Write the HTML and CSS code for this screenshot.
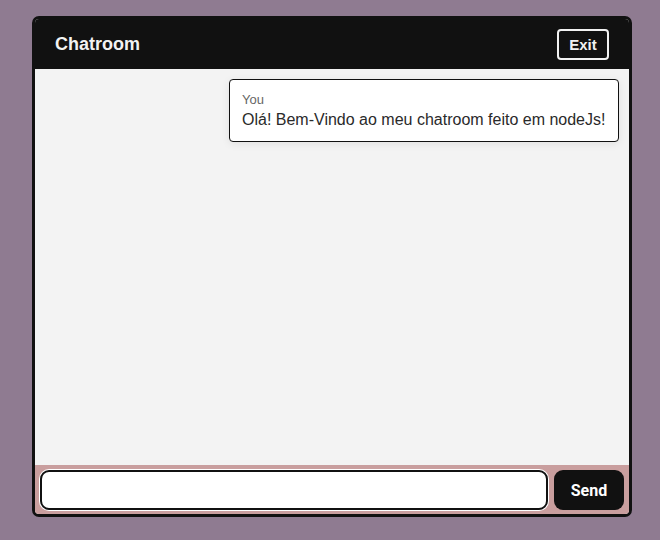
FILE: index.html
```html
<!DOCTYPE html>
<html>
<head>
<meta charset="utf-8">
<link rel="stylesheet" href="styles.css">
</head>
<body>
<div class="chat">
  <header class="chat-header">
    <h1 class="title">Chatroom</h1>
    <button class="exit">Exit</button>
  </header>
  <main class="messages">
    <div class="bubble">
      <div class="author">You</div>
      <div class="text">Olá! Bem-Vindo ao meu chatroom feito em nodeJs!</div>
    </div>
  </main>
  <footer class="composer">
    <input class="input" type="text">
    <button class="send">Send</button>
  </footer>
</div>
</body>
</html>
```
FILE: styles.css
```css
html, body {
  margin: 0;
  padding: 0;
  background: #8f7b91;
  font-family: "Liberation Sans", Arial, sans-serif;
}
body {
  padding: 16px 0 0 32px;
}
.chat {
  width: 594px;
  height: 495px;
  border: 3px solid #111;
  border-radius: 7px;
  overflow: hidden;
  display: flex;
  flex-direction: column;
  background: #f3f3f3;
}
.chat-header {
  height: 50px;
  flex: none;
  background: #111;
  display: flex;
  align-items: center;
  justify-content: space-between;
  padding: 0 20px;
}
.title {
  margin: 0;
  color: #f2f2f2;
  font-size: 18px;
  font-weight: bold;
}
.exit {
  font-family: "Liberation Sans", Arial, sans-serif;
  font-size: 15px;
  font-weight: bold;
  color: #f2f2f2;
  background: #111;
  border: 2px solid #f2f2f2;
  border-radius: 4px;
  width: 52px;
  height: 31px;
  padding: 0;
  margin-top: 1px;
}
.messages {
  flex: 1;
  display: flex;
  flex-direction: column;
  align-items: flex-end;
  padding: 10px 10px;
}
.bubble {
  background: #fff;
  border: 1px solid #111;
  border-radius: 4px;
  padding: 12px 12px 11px 12px;
  box-shadow: 0 2px 8px rgba(0,0,0,0.08);
  width: 364px;
}
.author {
  font-size: 13px;
  color: #666;
  line-height: 15px;
}
.text {
  font-size: 16px;
  color: #2a2a2a;
  line-height: 20px;
  margin-top: 3px;
}
.composer {
  flex: none;
  height: 49px;
  background: #c99e9e;
  display: flex;
  align-items: flex-start;
  gap: 6px;
  padding: 5px 5px 0 5px;
  box-sizing: border-box;
}
.input {
  flex: 1;
  height: 40px;
  box-sizing: border-box;
  border: 2px solid #111;
  border-radius: 9px;
  background: #fff;
  box-shadow: 0 0 0 1px #fff;
  outline: none;
}
.send {
  width: 70px;
  height: 40px;
  background: #111;
  color: #fff;
  border: none;
  border-radius: 9px;
  font-family: Roboto, "Liberation Sans", sans-serif;
  font-size: 16px;
  font-weight: bold;
  padding: 0;
}
```
